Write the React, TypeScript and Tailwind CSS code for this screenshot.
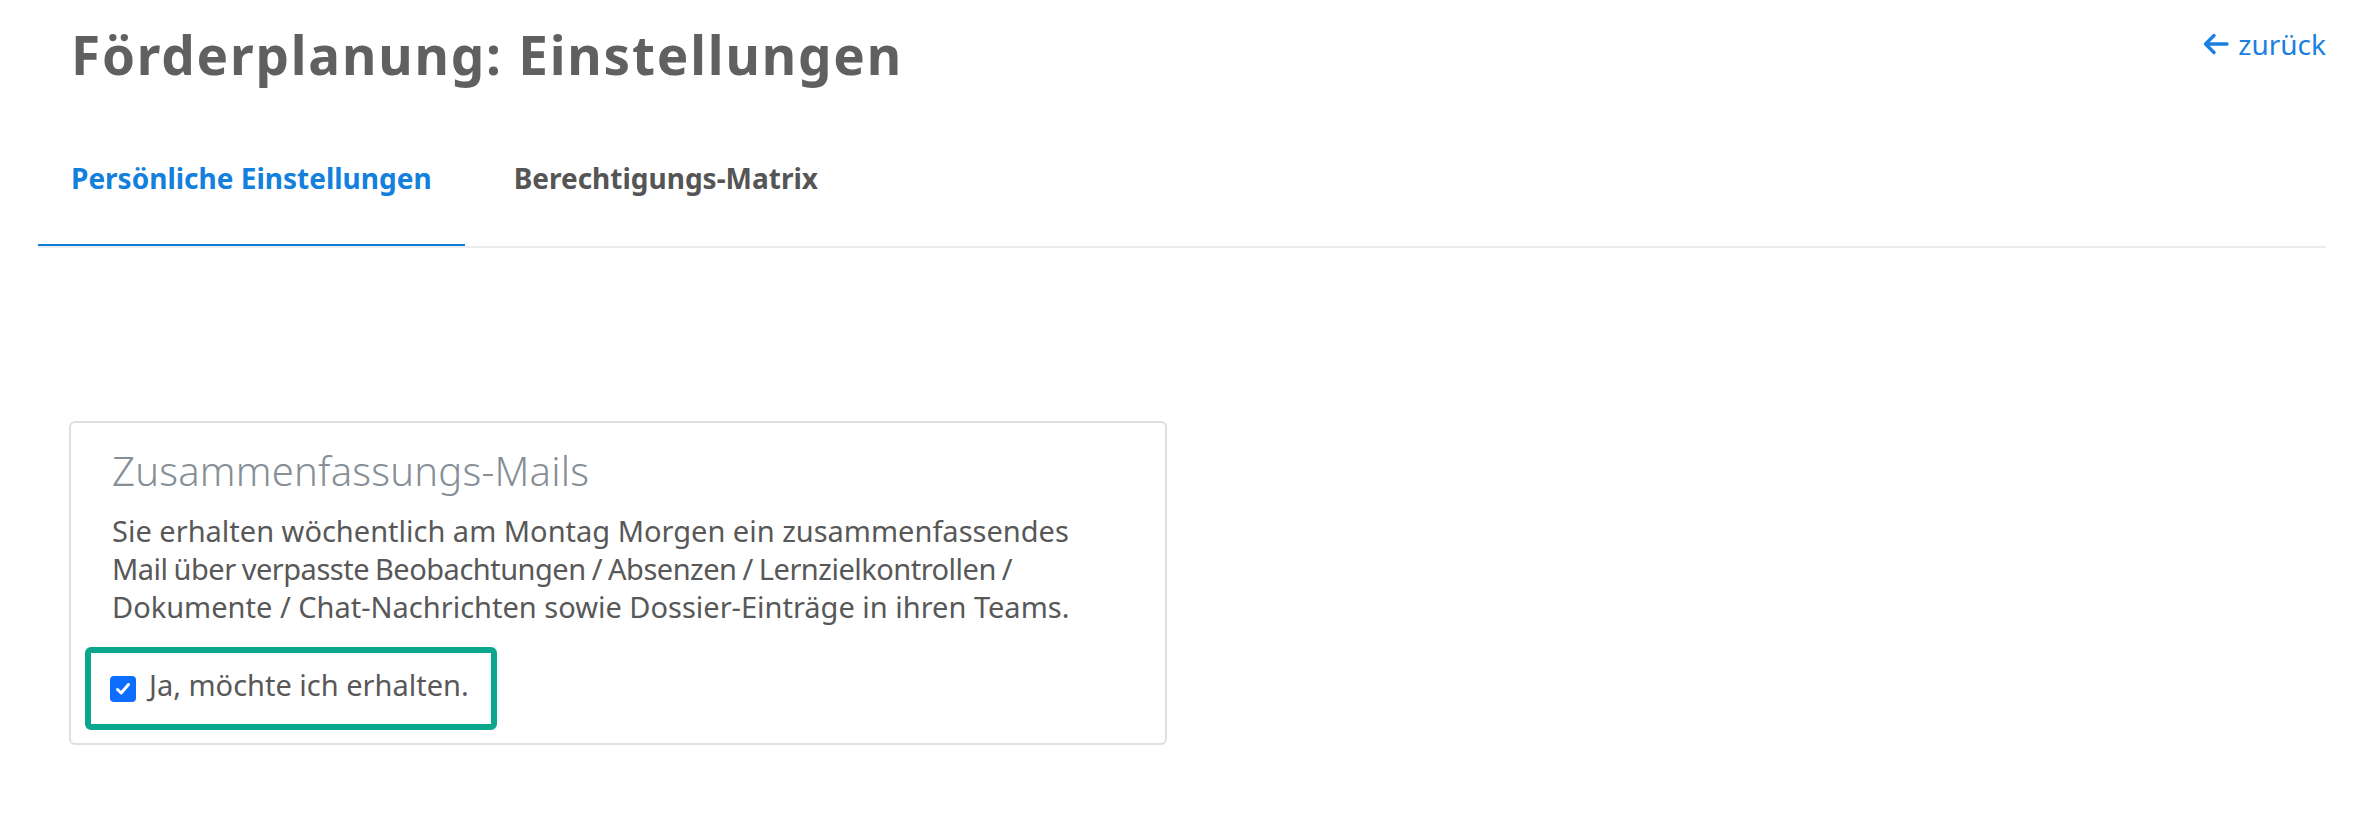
import React from 'react';

/* ------------------------------------------------------------------ */
/*  Small pieces                                                       */
/* ------------------------------------------------------------------ */
function BackArrow() {
  return (
    <svg width="26" height="22" viewBox="0 0 26 22" fill="none" aria-hidden="true">
      <path
        d="M24 11H3M11 2.5L2.5 11L11 19.5"
        stroke="currentColor"
        strokeWidth="3.4"
        strokeLinecap="round"
        strokeLinejoin="round"
      />
    </svg>
  );
}

function CheckedBox() {
  return (
    <span className="flex h-[26px] w-[26px] shrink-0 items-center justify-center rounded-[4px] bg-[#0d6efd]">
      <svg width="18" height="18" viewBox="0 0 18 18" fill="none" aria-hidden="true">
        <path
          d="M3.5 9.5L7.2 13L14.5 4.5"
          stroke="#fff"
          strokeWidth="3"
          strokeLinecap="round"
          strokeLinejoin="round"
        />
      </svg>
    </span>
  );
}

/* ------------------------------------------------------------------ */
/*  Page                                                               */
/* ------------------------------------------------------------------ */
export default function App() {
  return (
    <div className="min-h-screen w-full bg-white pl-[38px] pr-[46px] font-['Noto_Sans',sans-serif]">
      {/* Header: title + back link */}
      <div className="flex items-start justify-between pt-[25px]">
        <h1 className="pl-[33px] text-[53px] font-bold leading-[60px] tracking-[1.8px] text-[#606060]">
          Förderplanung: Einstellungen
        </h1>
        <a href="#" className="mt-[1px] flex items-center gap-[9px] text-[28px] leading-[36px] text-[#1a80e0]">
          <BackArrow />
          <span>zurück</span>
        </a>
      </div>

      {/* Tabs */}
      <nav className="mt-[75px] flex gap-[16px] border-b-2 border-[#ececec]">
        <div className="border-b-2 border-[#0b7fd6] px-[33px] pb-[48px] text-[28px] font-bold leading-[36px] text-[#1380dd]">
          Persönliche Einstellungen
        </div>
        <div className="border-b-2 border-transparent px-[33px] pb-[48px] text-[28px] font-bold leading-[36px] text-[#555555]">
          Berechtigungs-Matrix
        </div>
      </nav>

      {/* Settings card */}
      <div className="ml-[31px] mt-[173px] w-[1098px] rounded-[6px] border-2 border-[#dfdfdf] pb-[13px] pl-[14px] pt-[25px]">
        <h2 className="ml-[27px] text-[40px] font-light leading-[46px] tracking-[0.2px] text-[#868e96]">
          Zusammenfassungs-Mails
        </h2>
        <p className="ml-[27px] mt-[18px] text-[29px] leading-[38px] text-[#585858]">
          Sie erhalten wöchentlich am Montag Morgen ein zusammenfassendes
          <br />
          <span className="tracking-[-0.5px] [word-spacing:-1px]">
            Mail über verpasste Beobachtungen / Absenzen / Lernzielkontrollen /
          </span>
          <br />
          Dokumente / Chat-Nachrichten sowie Dossier-Einträge in ihren Teams.
        </p>
        <div className="mt-[21px] h-[83px] w-[412px] rounded-[6px] border-[6px] border-[#0aa68d] pl-[19px] pt-[14px]">
          <label className="flex items-start gap-[13px]">
            <span className="mt-[9px]">
              <CheckedBox />
            </span>
            <span className="text-[29px] leading-[36px] text-[#585858]">Ja, möchte ich erhalten.</span>
          </label>
        </div>
      </div>
    </div>
  );
}
